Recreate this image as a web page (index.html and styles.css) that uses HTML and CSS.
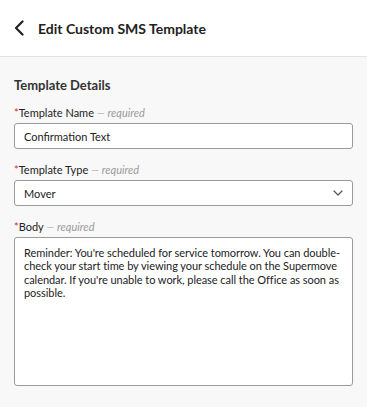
FILE: index.html
```html
<!DOCTYPE html>
<html lang="en">
<head>
<meta charset="UTF-8">
<meta name="viewport" content="width=device-width, initial-scale=1.0">
<title>Edit Custom SMS Template</title>
<link rel="stylesheet" href="styles.css">
</head>
<body>
<div class="header">
    <span class="back">
        <svg width="10" height="16" viewBox="0 0 10 16"><path d="M8.5 1.5 L2 8 L8.5 14.5" fill="none" stroke="#222" stroke-width="2.2" stroke-linecap="round" stroke-linejoin="round"/></svg>
    </span>
    <h1>Edit Custom SMS Template</h1>
</div>
<div class="content">
    <h3>Template Details</h3>
    <div class="field">
        <label><span class="star">*</span>Template Name <span class="req">— required</span></label>
        <div class="input">Confirmation Text</div>
    </div>
    <div class="field">
        <label><span class="star">*</span>Template Type <span class="req">— required</span></label>
        <div class="input select">
            <span>Mover</span>
            <svg width="10" height="6" viewBox="0 0 10 6"><path d="M1 1 L5 5 L9 1" fill="none" stroke="#555" stroke-width="1.2" stroke-linecap="round" stroke-linejoin="round"/></svg>
        </div>
    </div>
    <div class="field">
        <label><span class="star">*</span>Body <span class="req">— required</span></label>
        <div class="textarea">Reminder: You're scheduled for service tomorrow. You can double-check your start time by viewing your schedule on the Supermove calendar. If you're unable to work, please call the Office as soon as possible.</div>
    </div>
</div>
</body>
</html>
```

FILE: styles.css
```css
body {
    margin: 0;
    font-family: Lato, "Open Sans", sans-serif;
    background-color: #f8f8f8;
    color: #222;
}
.header {
    height: 56px;
    background-color: #ffffff;
    border-bottom: 1px solid #e2e2e2;
    display: flex;
    align-items: center;
    padding: 0 14px;
}
.back {
    display: flex;
    width: 24px;
}
.header h1 {
    margin: 0;
    font-size: 14px;
    font-weight: bold;
    color: #222;
}
.content {
    padding: 20px 14px;
}
h3 {
    margin: 0 0 12px 0;
    font-size: 13px;
    line-height: 16px;
    font-weight: bold;
    color: #333;
}
.field {
    margin-bottom: 13px;
}
.field label {
    display: block;
    font-size: 11px;
    line-height: 16px;
    margin-bottom: 2px;
    color: #222;
}
.star {
    color: #d0312d;
}
.req {
    font-style: italic;
    color: #9a9a9a;
}
.input {
    box-sizing: border-box;
    height: 26px;
    background-color: #ffffff;
    border: 1px solid #9a9a9a;
    border-radius: 3px;
    padding: 0 9px;
    font-size: 11px;
    display: flex;
    align-items: center;
}
.select {
    justify-content: space-between;
}
.textarea {
    box-sizing: border-box;
    height: 149px;
    background-color: #ffffff;
    border: 1px solid #9a9a9a;
    border-radius: 3px;
    padding: 8px 0 8px 9px;
    font-size: 11px;
    line-height: 13.3px;
    letter-spacing: -0.05px;
}
```
